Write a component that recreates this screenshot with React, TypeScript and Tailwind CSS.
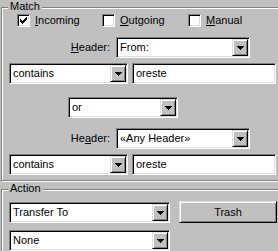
import React from 'react'

const sunken =
  'bg-white border border-t-[#808080] border-l-[#808080] border-b-white border-r-white shadow-[inset_1px_1px_0_#000,inset_-1px_-1px_0_#dfdfdf]'
const raised =
  'bg-[#c0c0c0] border border-t-[#dfdfdf] border-l-[#dfdfdf] border-b-black border-r-black shadow-[inset_1px_1px_0_#fff,inset_-1px_-1px_0_#808080]'

const Arrow = () => (
  <svg width="7" height="4" viewBox="0 0 7 4" shapeRendering="crispEdges">
    <rect x="0" y="0" width="7" height="1" fill="#000" />
    <rect x="1" y="1" width="5" height="1" fill="#000" />
    <rect x="2" y="2" width="3" height="1" fill="#000" />
    <rect x="3" y="3" width="1" height="1" fill="#000" />
  </svg>
)

const Check = () => (
  <svg width="7" height="7" viewBox="0 0 7 7" shapeRendering="crispEdges">
    {[2, 3, 4, 3, 2, 1, 0].map((top, col) => (
      <rect key={col} x={col} y={top} width="1" height="3" fill="#000" />
    ))}
  </svg>
)

const Combo = ({ value, width }: { value: string; width: string }) => (
  <div className={`${sunken} ${width} h-[21px] flex p-[1px]`}>
    <span className="flex-1 flex items-center pl-[2px] whitespace-nowrap overflow-hidden">{value}</span>
    <div className={`${raised} w-[16px] flex items-center justify-center`}>
      <Arrow />
    </div>
  </div>
)

const TextBox = ({ value, width }: { value: string; width: string }) => (
  <div className={`${sunken} ${width} h-[21px] flex items-center pl-[3px]`}>{value}</div>
)

const CheckBox = ({ checked, label, hot, width }: { checked?: boolean; label: string; hot: number; width: string }) => (
  <div className={`flex items-center gap-[5px] ${width}`}>
    <div className={`${sunken} w-[13px] h-[13px] flex items-center justify-center`}>{checked && <Check />}</div>
    <span>
      {label.slice(0, hot)}
      <u>{label[hot]}</u>
      {label.slice(hot + 1)}
    </span>
  </div>
)

const Group = ({ label, height, children }: { label: string; height: string; children: React.ReactNode }) => (
  <div className={`w-[300px] ${height} border border-[#808080] shadow-[inset_1px_1px_0_#fff,1px_1px_0_#fff]`}>
    <div className="-mt-[7px] ml-[6px] px-[2px] w-fit h-[11px] leading-[11px] bg-[#c0c0c0]">{label}</div>
    {children}
  </div>
)

const App = () => {
  return (
    <div className="w-[278px] h-[251px] overflow-hidden bg-[#c0c0c0] text-black text-[11px] leading-none font-['Liberation_Sans',Arial,sans-serif]">
      <div className="pt-[7px] pl-[1px]">
        <Group label="Match" height="h-[174px]">
          <div className="mt-[2px] pl-[15px] flex">
            <CheckBox checked label="Incoming" hot={0} width="w-[85px]" />
            <CheckBox label="Outgoing" hot={0} width="w-[86px]" />
            <CheckBox label="Manual" hot={0} width="w-[80px]" />
          </div>

          <div className="mt-[10px] flex items-center gap-[6px]">
            <span className="w-[108px] text-right">
              <u>H</u>eader:
            </span>
            <Combo value="From:" width="w-[134px]" />
          </div>

          <div className="mt-[5px] pl-[7px] flex gap-[4px]">
            <Combo value="contains" width="w-[119px]" />
            <TextBox value="oreste" width="w-[144px]" />
          </div>

          <div className="mt-[13px] pl-[66px] flex">
            <Combo value="or" width="w-[110px]" />
          </div>

          <div className="mt-[10px] flex items-center gap-[6px]">
            <span className="w-[108px] text-right">
              He<u>a</u>der:
            </span>
            <Combo value="«Any Header»" width="w-[134px]" />
          </div>

          <div className="mt-[5px] pl-[7px] flex gap-[4px]">
            <Combo value="contains" width="w-[119px]" />
            <TextBox value="oreste" width="w-[144px]" />
          </div>
        </Group>

        <div className="mt-[8px]">
          <Group label="Action" height="h-[80px]">
            <div className="mt-[7px] pl-[7px] flex items-end gap-[9px]">
              <Combo value="Transfer To" width="w-[161px]" />
              <button className={`${raised} w-[98px] h-[22px] flex items-center justify-center`}>Trash</button>
            </div>
            <div className="mt-[7px] pl-[7px] flex">
              <Combo value="None" width="w-[161px]" />
            </div>
          </Group>
        </div>
      </div>
    </div>
  )
}

export default App
